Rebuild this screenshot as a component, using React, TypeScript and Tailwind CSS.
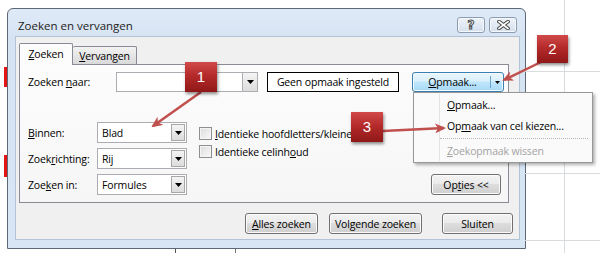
import React from "react";

const DropArrow = () => (
  <svg width="7" height="4" viewBox="0 0 7 4">
    <path d="M0 0h7L3.5 4z" fill="#000" />
  </svg>
);

function Select({ value }: { value: string }) {
  return (
    <div className="flex h-[21px] w-[90px] items-stretch border border-[#abadb3] bg-white p-[1px]">
      <span className="flex flex-1 items-center pl-[3px]">{value}</span>
      <span className="flex w-[14px] items-center justify-center border border-[#a7a7a7] bg-[linear-gradient(#f4f4f4,#dcdcdc)]">
        <DropArrow />
      </span>
    </div>
  );
}

function Btn({ className, children }: { className: string; children: React.ReactNode }) {
  return (
    <div
      className={
        "flex h-[21px] items-center justify-center rounded-[3px] border border-[#707070] bg-[linear-gradient(#f3f3f3,#ebebeb_45%,#dddddd_50%,#cfcfcf)] shadow-[inset_0_0_0_1px_#fbfbfb] " +
        className
      }
    >
      {children}
    </div>
  );
}

function Check({ children }: { children: React.ReactNode }) {
  return (
    <div className="flex h-[13px] items-center gap-[3px]">
      <span className="h-[13px] w-[13px] border border-[#8f8f8f] bg-[linear-gradient(135deg,#dcdcdc,#fafafa)] shadow-[inset_0_0_0_1px_#f4f4f4]" />
      <span>{children}</span>
    </div>
  );
}

function Badge({ className, n }: { className: string; n: string }) {
  return (
    <div
      className={
        "absolute flex items-center justify-center bg-[linear-gradient(#d14a4a,#b52a2a_45%,#8f1818)] font-['Liberation_Sans',sans-serif] text-[15px] tracking-normal text-white shadow-[1px_2px_3px_rgba(0,0,0,0.45)] " +
        className
      }
    >
      {n}
    </div>
  );
}

export default function App() {
  return (
    <div className="relative h-[253px] w-[600px] overflow-hidden bg-white font-['Open_Sans',sans-serif] text-[10.5px] leading-[14px] tracking-[-0.15px] text-black">
      {/* spreadsheet behind */}
      <div className="absolute left-[564px] top-0 h-full w-px bg-[#d9dcdf]" />
      <div className="absolute left-[525px] top-[71px] h-px w-[75px] bg-[#d9dcdf]" />
      <div className="absolute left-[525px] top-[173px] h-px w-[75px] bg-[#d9dcdf]" />
      <div className="absolute left-[525px] top-[240px] h-px w-[75px] bg-[#d9dcdf]" />
      <div className="absolute left-[4px] top-[67px] h-[20px] w-[3px] bg-[#e31414]" />
      <div className="absolute left-[4px] top-[155px] h-[22px] w-[3px] bg-[#e31414]" />
      <div className="absolute left-[175px] top-[249px] h-[4px] w-px bg-[#555]" />
      <div className="absolute left-[235px] top-[249px] h-[4px] w-px bg-[#777]" />

      <div className="pl-[7px] pt-[8px]">
        {/* dialog */}
        <div className="flex h-[241px] w-[519px] flex-col rounded-t-[6px] border border-[#5d6876] bg-[linear-gradient(#dfeaf7,#d6e3f2_30px,#d8e5f4)]">
          {/* title bar */}
          <div className="flex h-[27px] items-start justify-between pl-[10px] pr-[8px]">
            <span className="mt-[10px] text-[11.5px] leading-[14px] tracking-[0px] text-[#222]">Zoeken en vervangen</span>
            <div className="mt-[8px] flex gap-[4px]">
              <div className="flex h-[16px] w-[28px] items-center justify-center rounded-[3px] border border-[#8c9cb1] bg-[linear-gradient(#eef3f9,#d5e0ee)] shadow-[inset_0_0_0_1px_#f6f9fc]">
                <span className="font-['DejaVu_Sans',sans-serif] text-[12px] font-bold leading-[12px] text-white [-webkit-text-stroke:1px_#4a4a4a]">?</span>
              </div>
              <div className="flex h-[16px] w-[28px] items-center justify-center rounded-[3px] border border-[#8c9cb1] bg-[linear-gradient(#eef3f9,#d5e0ee)] shadow-[inset_0_0_0_1px_#f6f9fc]">
                <svg width="13" height="10" viewBox="0 0 13 10">
                  <path d="M2 1.5L11 8.5M11 1.5L2 8.5" stroke="#4a4a4a" strokeWidth="3.6" strokeLinecap="square" />
                  <path d="M2 1.5L11 8.5M11 1.5L2 8.5" stroke="#fff" strokeWidth="1.6" strokeLinecap="square" />
                </svg>
              </div>
            </div>
          </div>

          {/* client */}
          <div className="ml-[7px] mr-[5px] flex h-[204px] flex-col border border-[#b3c3d7] bg-[#f0f0f0] pl-[3px] pt-[6px]">
            {/* tabs */}
            <div className="flex h-[21px] items-end">
              <div className="relative z-10 -mb-px flex h-[22px] w-[54px] items-center justify-center rounded-t-[2px] border border-b-0 border-[#898c95] bg-[#fcfcfc] pb-[2px]">
                <span>
                  <span className="underline">Z</span>oeken
                </span>
              </div>
              <div className="flex h-[18px] w-[64px] items-center justify-center rounded-t-[2px] border border-b-0 border-l-0 border-[#898c95] bg-[linear-gradient(#f3f3f3,#e6e6e6_50%,#d9d9d9)]">
                <span>
                  <span className="underline">V</span>ervangen
                </span>
              </div>
            </div>
            {/* panel */}
            <div className="flex h-[139px] w-[490px] flex-col border border-[#898c95] bg-[linear-gradient(#fcfcfc,#f6f6f6)] pl-[8px] pt-[7px]">
              <div className="flex h-[20px] items-center">
                <span className="w-[88px]">
                  Zoeken <span className="underline">n</span>aar:
                </span>
                <div className="flex h-[20px] w-[142px] items-stretch border border-[#abadb3] bg-white">
                  <span className="flex-1" />
                  <span className="flex w-[15px] items-center justify-center border-l border-[#abadb3] bg-[linear-gradient(#f4f4f4,#dcdcdc)]">
                    <DropArrow />
                  </span>
                </div>
                <div className="ml-[9px] flex h-[20px] w-[132px] items-center justify-center border border-black bg-white">
                  Geen opmaak ingesteld
                </div>
                <div className="ml-[13px] flex h-[20px] w-[92px] items-stretch rounded-[3px] border border-[#3c7fb1] bg-[linear-gradient(#eaf6fd,#d9f0fc_45%,#bee6fd_50%,#a7d9f5)] shadow-[inset_0_0_0_1px_#f2fafe]">
                  <span className="flex flex-1 items-center justify-center pl-[2px]">
                    <span>
                      <span className="underline">O</span>pmaak...
                    </span>
                  </span>
                  <span className="my-[3px] w-px bg-[#6fa5cc]" />
                  <span className="flex w-[12px] items-center justify-center">
                    <svg width="5" height="3" viewBox="0 0 5 3">
                      <path d="M0 0h5L2.5 3z" fill="#000" />
                    </svg>
                  </span>
                </div>
              </div>

              <div className="mt-[30px] flex pr-[7px]">
                <div className="flex flex-col gap-[5px]">
                  <div className="flex h-[21px] items-center">
                    <span className="w-[69px]">
                      <span className="underline">B</span>innen:
                    </span>
                    <Select value="Blad" />
                  </div>
                  <div className="flex h-[21px] items-center">
                    <span className="w-[69px]">
                      Zoek<span className="underline">r</span>ichting:
                    </span>
                    <Select value="Rij" />
                  </div>
                  <div className="flex h-[21px] items-center">
                    <span className="w-[69px]">
                      Zoe<span className="underline">k</span>en in:
                    </span>
                    <Select value="Formules" />
                  </div>
                </div>
                <div className="ml-[12px] flex flex-col gap-[5px] pt-[5px]">
                  <Check>
                    <span className="underline">I</span>dentieke hoofdletters/kleine
                  </Check>
                  <Check>
                    Identieke celinh<span className="underline">o</span>ud
                  </Check>
                </div>
                <div className="ml-auto self-end">
                  <Btn className="w-[70px]">
                    <span>
                      Op<span className="underline">t</span>ies &lt;&lt;
                    </span>
                  </Btn>
                </div>
              </div>
            </div>

            {/* bottom buttons */}
            <div className="mt-[10px] flex justify-end pr-[6px]">
              <Btn className="w-[73px]">
                <span>
                  <span className="underline">A</span>lles zoeken
                </span>
              </Btn>
              <Btn className="ml-[11px] w-[93px]">
                <span>
                  Vol<span className="underline">g</span>ende zoeken
                </span>
              </Btn>
              <Btn className="ml-[20px] w-[71px]">Sluiten</Btn>
            </div>
          </div>
        </div>
      </div>

      {/* dropdown menu */}
      <div className="absolute left-[413px] top-[92px] flex h-[71px] w-[180px] flex-col border border-[#979797] bg-[#fafafa] py-[1px] shadow-[2px_2px_3px_rgba(0,0,0,0.3)]">
        <div className="absolute bottom-[1px] left-[25px] top-[1px] w-px bg-[#e2e3e3]" />
        <div className="flex h-[22px] items-center pl-[33px]">
          <span>
            <span className="underline">O</span>pmaak...
          </span>
        </div>
        <div className="flex h-[21px] items-center pl-[33px]">
          <span>
            Op<span className="underline">m</span>aak van cel kiezen...
          </span>
        </div>
        <div className="flex h-[5px] items-center pl-[26px] pr-[4px]">
          <div className="h-0 w-full border-t border-dotted border-[#b5b5b5]" />
        </div>
        <div className="flex h-[20px] items-center pl-[33px] text-[#a3a3a3]">
          <span>
            <span className="underline">Z</span>oekopmaak wissen
          </span>
        </div>
      </div>

      {/* callouts */}
      <svg className="pointer-events-none absolute left-0 top-0" width="600" height="253">
        <defs>
          <marker id="ah" markerWidth="11" markerHeight="10" refX="9" refY="5" orient="auto" markerUnits="userSpaceOnUse">
            <path d="M0,0 L11,5 L0,10 L3,5 z" fill="#c0504d" />
          </marker>
        </defs>
        <line x1="201" y1="92" x2="153" y2="126" stroke="#c0504d" strokeWidth="2.5" markerEnd="url(#ah)" />
        <line x1="541" y1="62" x2="504" y2="80" stroke="#c0504d" strokeWidth="2.5" markerEnd="url(#ah)" />
        <line x1="383" y1="131" x2="444" y2="128" stroke="#c0504d" strokeWidth="2.5" markerEnd="url(#ah)" />
      </svg>
      <Badge className="left-[185px] top-[62px] h-[30px] w-[32px]" n="1" />
      <Badge className="left-[537px] top-[35px] h-[28px] w-[31px]" n="2" />
      <Badge className="left-[351px] top-[112px] h-[30px] w-[32px]" n="3" />
    </div>
  );
}
